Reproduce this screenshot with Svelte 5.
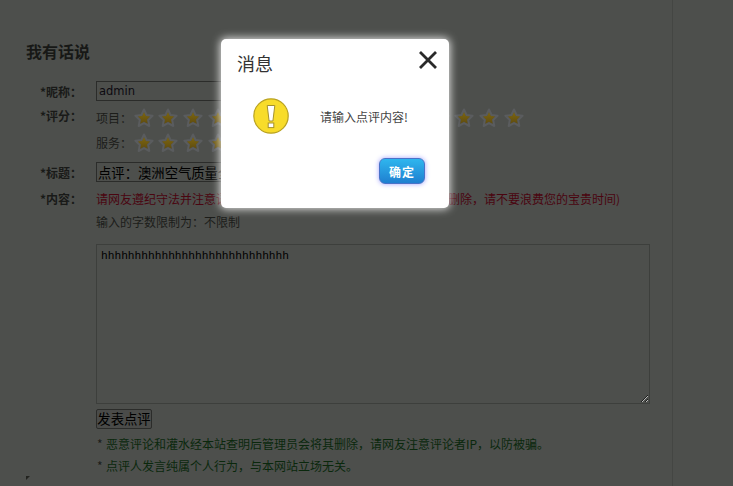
<script>
  const rowOneStars = Array(16).fill(0);
  const rowTwoStars = Array(4).fill(0);
  const starPoints = "10,1.5 12.6,7 18.6,7.8 14.2,12 15.3,18 10,15.1 4.7,18 5.8,12 1.4,7.8 7.4,7";
</script>

<div class="page">
  <div class="main">
    <h2 class="heading">我有话说</h2>

    <div class="row row-nick">
      <span class="label">*昵称：</span>
      <input class="field" value="admin" />
    </div>

    <div class="row row-score">
      <span class="label">*评分：</span>
      <div class="scores">
        <div class="score">
          <span class="score-name">项目：</span>
          {#each rowOneStars as _}
            <svg class="star" viewBox="0 0 20 20">
              <defs>
                <linearGradient id="star-gold" x1="0" y1="0" x2="0" y2="1">
                  <stop offset="0" stop-color="#7d6610" />
                  <stop offset="1" stop-color="#5f4c10" />
                </linearGradient>
              </defs>
              <polygon class="star-halo" points={starPoints} />
              <polygon class="star-fill" points={starPoints} fill="url(#star-gold)" />
            </svg>
          {/each}
        </div>
        <div class="score">
          <span class="score-name">服务：</span>
          {#each rowTwoStars as _}
            <svg class="star" viewBox="0 0 20 20">
              <polygon class="star-halo" points={starPoints} />
              <polygon class="star-fill" points={starPoints} fill="url(#star-gold)" />
            </svg>
          {/each}
        </div>
      </div>
    </div>

    <div class="row row-title">
      <span class="label">*标题：</span>
      <input class="field field-title" value="点评：澳洲空气质量全" />
    </div>

    <div class="row row-content">
      <span class="label">*内容：</span>
      <div class="content">
        <p class="warn">请网友遵纪守法并注意语言文明(恶意评论及灌水内容一经查实后将删除，请不要浪费您的宝贵时间)</p>
        <p class="limit">输入的字数限制为：不限制</p>
        <textarea class="body-input">hhhhhhhhhhhhhhhhhhhhhhhhhhhh</textarea>
        <button class="submit">发表点评</button>
        <p class="note note-first"><span class="asterisk">*</span>恶意评论和灌水经本站查明后管理员会将其删除，请网友注意评论者IP，以防被骗。</p>
        <p class="note"><span class="asterisk">*</span>点评人发言纯属个人行为，与本网站立场无关。</p>
      </div>
    </div>
  </div>

  <span class="corner"></span>

  <div class="dialog">
    <div class="dialog-head">
      <span class="dialog-title">消息</span>
      <svg class="close" viewBox="0 0 18 18">
        <path d="M1 1 L17 17 M17 1 L1 17" />
      </svg>
    </div>
    <div class="dialog-body">
      <svg class="alert" viewBox="0 0 36 36">
        <circle cx="18" cy="18" r="17.2" fill="#f8dc2a" stroke="#b9a222" stroke-width="1.2" />
        <path d="M14.2 7.5 H21.8 L19.9 23 H16.1 Z" fill="#fff" stroke="#a5922e" stroke-width="1" stroke-linejoin="round" />
        <rect x="15.2" y="25" width="5.6" height="4.6" fill="#fff" stroke="#a5922e" stroke-width="1" />
      </svg>
      <span class="dialog-text">请输入点评内容!</span>
    </div>
    <div class="dialog-foot">
      <button class="ok">确定</button>
    </div>
  </div>
</div>

<style>
  :global(body) {
    background: #4d4f4c;
  }

  .page {
    position: relative;
    width: 733px;
    height: 486px;
    overflow: hidden;
    font-family: "Noto Sans CJK SC", "Liberation Sans", sans-serif;
    font-size: 12px;
    color: #1c1d1a;
  }

  .main {
    box-sizing: border-box;
    width: 673px;
    height: 486px;
    padding: 42px 0 0 26px;
    border-right: 1px solid #444643;
  }

  .heading {
    margin: 0 0 20px;
    height: 19px;
    font-size: 16px;
    line-height: 19px;
    font-weight: 700;
    color: #171816;
  }

  .row {
    display: flex;
  }

  .label {
    box-sizing: border-box;
    flex: none;
    width: 70px;
    padding: 1px 0 0 14px;
    font-weight: 700;
    line-height: 20px;
    color: #191a18;
  }

  .field {
    box-sizing: border-box;
    width: 300px;
    height: 20px;
    padding: 0 2px;
    border: 1px solid #2b2c2a;
    background: transparent;
    font-family: "DejaVu Sans", sans-serif;
    font-size: 11.5px;
    color: #0c0a10;
    outline: none;
  }

  .field-title {
    padding: 0 1px;
    font-family: "Noto Sans CJK SC", sans-serif;
    font-size: 13.33px;
    color: #000;
  }

  .row-score {
    margin-top: 3px;
  }

  .scores {
    display: flex;
    flex-direction: column;
  }

  .score {
    display: flex;
    align-items: center;
    gap: 4.67px;
    height: 25px;
  }

  .score-name {
    flex: none;
    width: 33px;
    white-space: nowrap;
    color: #1c1d1a;
  }

  .star {
    flex: none;
    width: 20px;
    height: 20px;
  }

  .star-halo {
    fill: #505254;
    stroke: #5a5c5e;
    stroke-width: 2;
    stroke-linejoin: round;
  }

  .star-fill {
    transform: scale(0.7);
    transform-origin: 10px 10.5px;
  }

  .row-title {
    margin-top: 7px;
  }

  .row-content {
    margin-top: 5px;
  }

  .content {
    display: flex;
    flex-direction: column;
    align-items: flex-start;
  }

  .warn {
    margin: 1px 0 0;
    line-height: 20px;
    white-space: nowrap;
    color: #4a0510;
  }

  .limit {
    margin: 3px 0 0;
    line-height: 20px;
    color: #1c1d1a;
  }

  .body-input {
    box-sizing: border-box;
    width: 554px;
    height: 160px;
    margin-top: 12px;
    padding: 5px 4px 2px;
    border: 1px solid #3d3f3c;
    background: transparent;
    font-family: "Liberation Mono", monospace;
    font-size: 11.2px;
    color: #000;
    outline: none;
  }

  .submit {
    box-sizing: border-box;
    width: 56px;
    height: 20px;
    margin-top: 5px;
    padding: 0;
    border: 1px solid #2b2c2a;
    border-radius: 2px;
    background: #4a4b49;
    font-family: "Noto Sans CJK SC", sans-serif;
    font-size: 13.33px;
    line-height: 18px;
    color: #000;
  }

  .note {
    margin: 2px 0 0;
    line-height: 20px;
    white-space: nowrap;
    color: #0a280c;
  }

  .note-first {
    margin-top: 5px;
  }

  .asterisk {
    display: inline-block;
    width: 9px;
    padding-left: 1px;
    color: #1c1d1a;
  }

  .corner {
    position: absolute;
    left: 26px;
    top: 476px;
    width: 0;
    height: 0;
    border-top: 4px solid #22231f;
    border-right: 4px solid transparent;
  }

  .dialog {
    position: absolute;
    left: 221px;
    top: 39px;
    box-sizing: border-box;
    width: 228px;
    height: 169px;
    padding: 12px 12px 0 16px;
    border-radius: 5px;
    background: #fff;
    box-shadow: 0 0 9px 1px rgba(255, 255, 255, 0.85);
  }

  .dialog-head {
    display: flex;
    justify-content: space-between;
    align-items: flex-start;
  }

  .dialog-title {
    font-size: 18px;
    line-height: 24px;
    color: #333;
  }

  .close {
    width: 18px;
    height: 18px;
    fill: none;
    stroke: #2a2a2a;
    stroke-width: 2.8;
  }

  .dialog-body {
    display: flex;
    align-items: center;
    margin-top: 23px;
    padding-left: 16px;
  }

  .alert {
    flex: none;
    width: 36px;
    height: 36px;
  }

  .dialog-text {
    margin-left: 31px;
    font-size: 12px;
    color: #444;
  }

  .dialog-foot {
    display: flex;
    justify-content: flex-end;
    margin-top: 24px;
    padding-right: 12px;
  }

  .ok {
    box-sizing: border-box;
    width: 46px;
    height: 26px;
    padding: 0;
    border: 1px solid #4a72c8;
    border-radius: 6px;
    background: linear-gradient(#2fb6ee, #1f7fd0);
    box-shadow: 0 0 5px #a0a0ff;
    font-family: "Noto Sans CJK SC", sans-serif;
    font-size: 12px;
    font-weight: 700;
    letter-spacing: 1px;
    color: #fff;
  }
</style>
